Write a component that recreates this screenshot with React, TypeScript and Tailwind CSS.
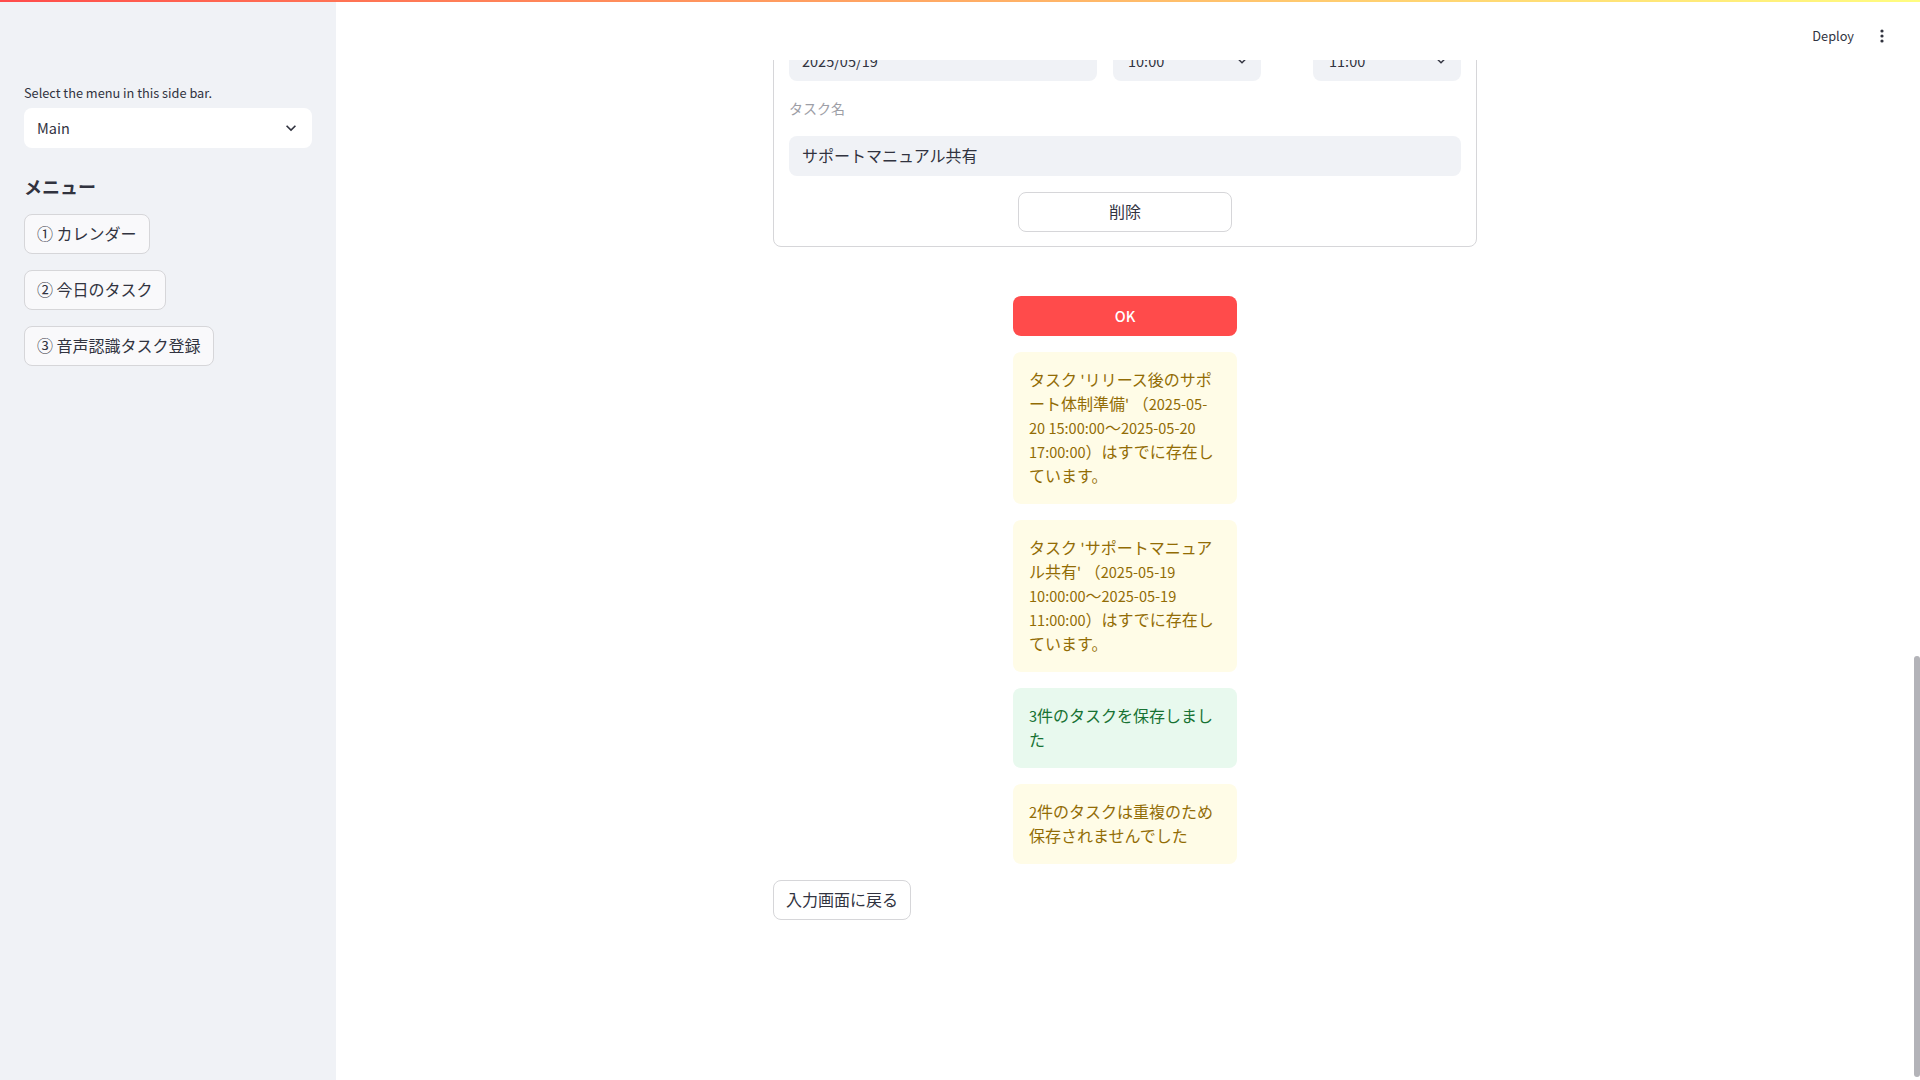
import React from "react";

const Chevron = ({ className = "" }: { className?: string }) => (
  <svg viewBox="0 0 24 24" className={className} fill="currentColor">
    <path d="M7.41 8.59 12 13.17l4.59-4.58L18 10l-6 6-6-6z" />
  </svg>
);

// Latin runs are set a touch smaller so they match the narrower Latin face of the original
const Mixed = ({ text }: { text: string }) => (
  <>
    {text.split(/([\x21-\x7e][\x20-\x7e]*[\x21-\x7e]|[\x21-\x7e])/).map((s, i) =>
      i % 2 ? (
        <span key={i} className="text-[0.91em] leading-none">
          {s}
        </span>
      ) : (
        s
      )
    )}
  </>
);

const warnings = [
  "タスク 'リリース後のサポート体制準備' （2025-05-20 15:00:00～2025-05-20 17:00:00）はすでに存在しています。",
  "タスク 'サポートマニュアル共有' （2025-05-19 10:00:00～2025-05-19 11:00:00）はすでに存在しています。",
];

const menuItems = ["① カレンダー", "② 今日のタスク", "③ 音声認識タスク登録"];

export default function App() {
  return (
    <div className="relative flex h-screen w-full overflow-hidden bg-white font-['Noto_Sans_CJK_JP',sans-serif] text-[#31333f]">
      {/* top decoration */}
      <div className="absolute inset-x-0 top-0 z-20 h-[2px] bg-gradient-to-r from-[#ff4b4b] to-[#fffd80]" />

      {/* Sidebar */}
      <aside className="w-[336px] shrink-0 bg-[#f0f2f6] px-6 pt-[80px]">
        <div className="flex h-6 items-center text-[12.75px] leading-[21px]">Select the menu in this side bar.</div>
        <div className="mt-1 flex h-10 items-center justify-between rounded-lg bg-white pl-[13px] pr-[11px] text-[14.5px]">
          <span>Main</span>
          <Chevron className="h-5 w-5 text-[#31333f]" />
        </div>
        <div className="mt-[26px] h-6 text-[18px] font-bold leading-6">メニュー</div>
        <div className="mt-[16px] flex flex-col items-start gap-4">
          {menuItems.map((m) => (
            <button
              key={m}
              className="flex h-10 items-center rounded-lg border border-[#d6d6d9] bg-[#f9f9fb] px-3 pb-[2px] text-[16px] leading-6"
            >
              {m}
            </button>
          ))}
        </div>
      </aside>

      {/* Main */}
      <main className="relative flex-1">
        <header className="absolute inset-x-0 top-0 z-10 flex h-[60px] items-center justify-end gap-5 bg-white pr-6 pt-[12px]">
          <span className="text-[12.75px] leading-5">Deploy</span>
          <svg viewBox="0 0 16 16" className="h-4 w-4" fill="#31333f">
            <circle cx="8" cy="3" r="1.6" />
            <circle cx="8" cy="8" r="1.6" />
            <circle cx="8" cy="13" r="1.6" />
          </svg>
        </header>

        <div className="mx-auto w-[704px] pt-[24px]">
          {/* Card */}
          <div className="rounded-lg border border-[#d6d6d9] px-[15px] pb-[14px] pt-4">
            <div className="flex">
              <div className="flex h-10 w-[308px] items-center rounded-lg bg-[#f0f2f6] pl-[13px] text-[14.5px]">
                2025/05/19
              </div>
              <div className="ml-4 flex h-10 w-[148px] items-center justify-between rounded-lg bg-[#f0f2f6] pl-[15px] pr-[11px] text-[14.5px]">
                <span>10:00</span>
                <Chevron className="h-4 w-4" />
              </div>
              <div className="ml-[52px] flex h-10 w-[148px] items-center justify-between rounded-lg bg-[#f0f2f6] pl-[16px] pr-[12px] text-[14.5px]">
                <span>11:00</span>
                <Chevron className="h-4 w-4" />
              </div>
            </div>
            <div className="mt-4 flex h-6 items-center pb-[2px] text-[14px] text-[#9d9ea6]">タスク名</div>
            <div className="mt-[15px] flex h-10 items-center rounded-lg bg-[#f0f2f6] pb-[2px] pl-[13px] text-[16px]">
              サポートマニュアル共有
            </div>
            <div className="mt-4 grid grid-cols-3 gap-4">
              <div />
              <button className="flex h-10 items-center justify-center rounded-lg border border-[#d6d6d9] bg-white pb-[3px] text-[16px]">
                削除
              </button>
              <div />
            </div>
          </div>

          {/* Result column */}
          <div className="mt-[49px] grid grid-cols-3 gap-4">
            <div />
            <div className="flex flex-col gap-4">
              <button className="flex h-10 items-center justify-center rounded-lg bg-[#ff4b4b] text-[14.5px] font-medium text-white">
                OK
              </button>
              {warnings.map((w) => (
                <div key={w} className="rounded-lg bg-[#fffce7] px-4 pb-[17px] pt-[15px] text-[16px] leading-6 text-[#926c05]">
                  <Mixed text={w} />
                </div>
              ))}
              <div className="rounded-lg bg-[#e8f9ee] px-4 pb-[17px] pt-[15px] text-[16px] leading-6 text-[#177233]">
                <Mixed text="3件のタスクを保存しました" />
              </div>
              <div className="rounded-lg bg-[#fffce7] px-4 pb-[17px] pt-[15px] text-[16px] leading-6 text-[#926c05]">
                <Mixed text="2件のタスクは重複のため保存されませんでした" />
              </div>
            </div>
            <div />
          </div>

          <button className="mt-4 flex h-10 items-center rounded-lg border border-[#d6d6d9] bg-white px-3 pb-[2px] text-[16px]">
            入力画面に戻る
          </button>
        </div>
      </main>

      {/* Scrollbar */}
      <div className="w-[6px] shrink-0 bg-white">
        <div className="mt-[656px] h-[421px] w-full rounded-full bg-[#b3b3b8]" />
      </div>
    </div>
  );
}
